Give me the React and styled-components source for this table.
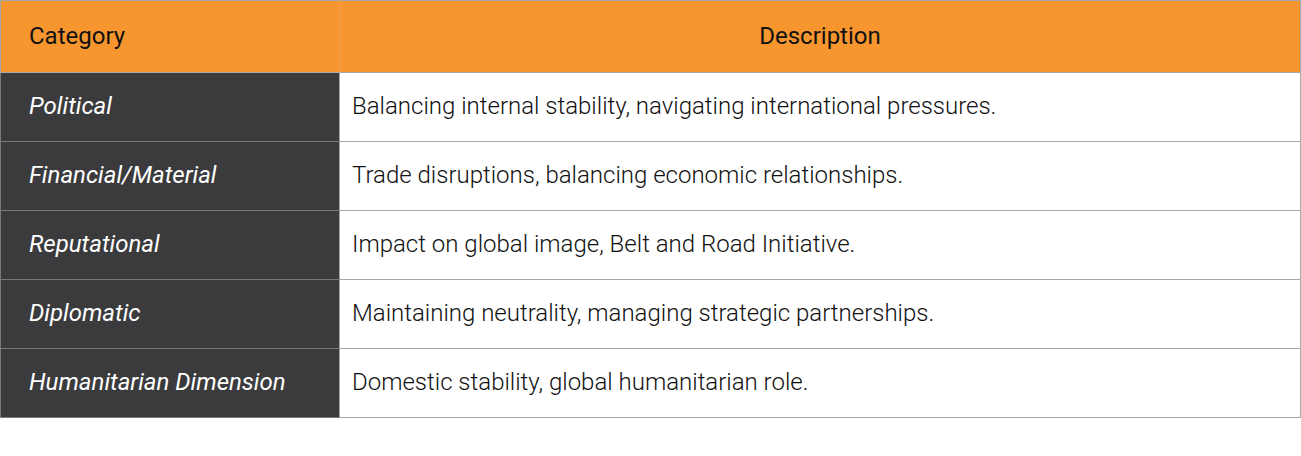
import React from "react";
import styled, { createGlobalStyle } from "styled-components";

const rows = [
  ["Political", "Balancing internal stability, navigating international pressures."],
  ["Financial/Material", "Trade disruptions, balancing economic relationships."],
  ["Reputational", "Impact on global image, Belt and Road Initiative."],
  ["Diplomatic", "Maintaining neutrality, managing strategic partnerships."],
  ["Humanitarian Dimension", "Domestic stability, global humanitarian role."],
];

export default function App() {
  return (
    <>
      <GlobalStyle />
      <Table>
        <thead>
          <tr>
            <HeadCell>Category</HeadCell>
            <HeadCell center>Description</HeadCell>
          </tr>
        </thead>
        <tbody>
          {rows.map(([cat, desc]) => (
            <tr key={cat}>
              <CategoryCell>{cat}</CategoryCell>
              <DescCell>{desc}</DescCell>
            </tr>
          ))}
        </tbody>
      </Table>
    </>
  );
}

const GlobalStyle = createGlobalStyle`
  body {
    margin: 0;
    background: #fff;
    font-family: Roboto, "Liberation Sans", sans-serif;
  }
`;

const Table = styled.table`
  width: 1301px;
  border-collapse: collapse;
  border: 1px solid #a8a8a8;
  table-layout: fixed;
`;

const HeadCell = styled.th`
  height: 69px;
  padding: 0 0 2px ${({ center }) => (center ? "0" : "28px")};
  background: #f7962f;
  color: #111;
  font-size: 24px;
  font-weight: 400;
  text-align: ${({ center }) => (center ? "center" : "left")};
  border: 1px solid #a8a8a8;
  border-right-color: ${({ center }) => (center ? "#a8a8a8" : "#e8a050")};
  &:first-child {
    width: 310px;
  }
`;

const CategoryCell = styled.td`
  height: 66px;
  padding: 0 0 2px 28px;
  background: #3b3b3d;
  color: #fff;
  font-size: 24px;
  font-style: italic;
  border: 1px solid #7a7a7a;
  border-right-color: #a8a8a8;
`;

const DescCell = styled.td`
  height: 66px;
  padding: 0 0 2px 12px;
  color: #111;
  font-size: 24px;
  font-weight: 300;
  border: 1px solid #a8a8a8;
`;
